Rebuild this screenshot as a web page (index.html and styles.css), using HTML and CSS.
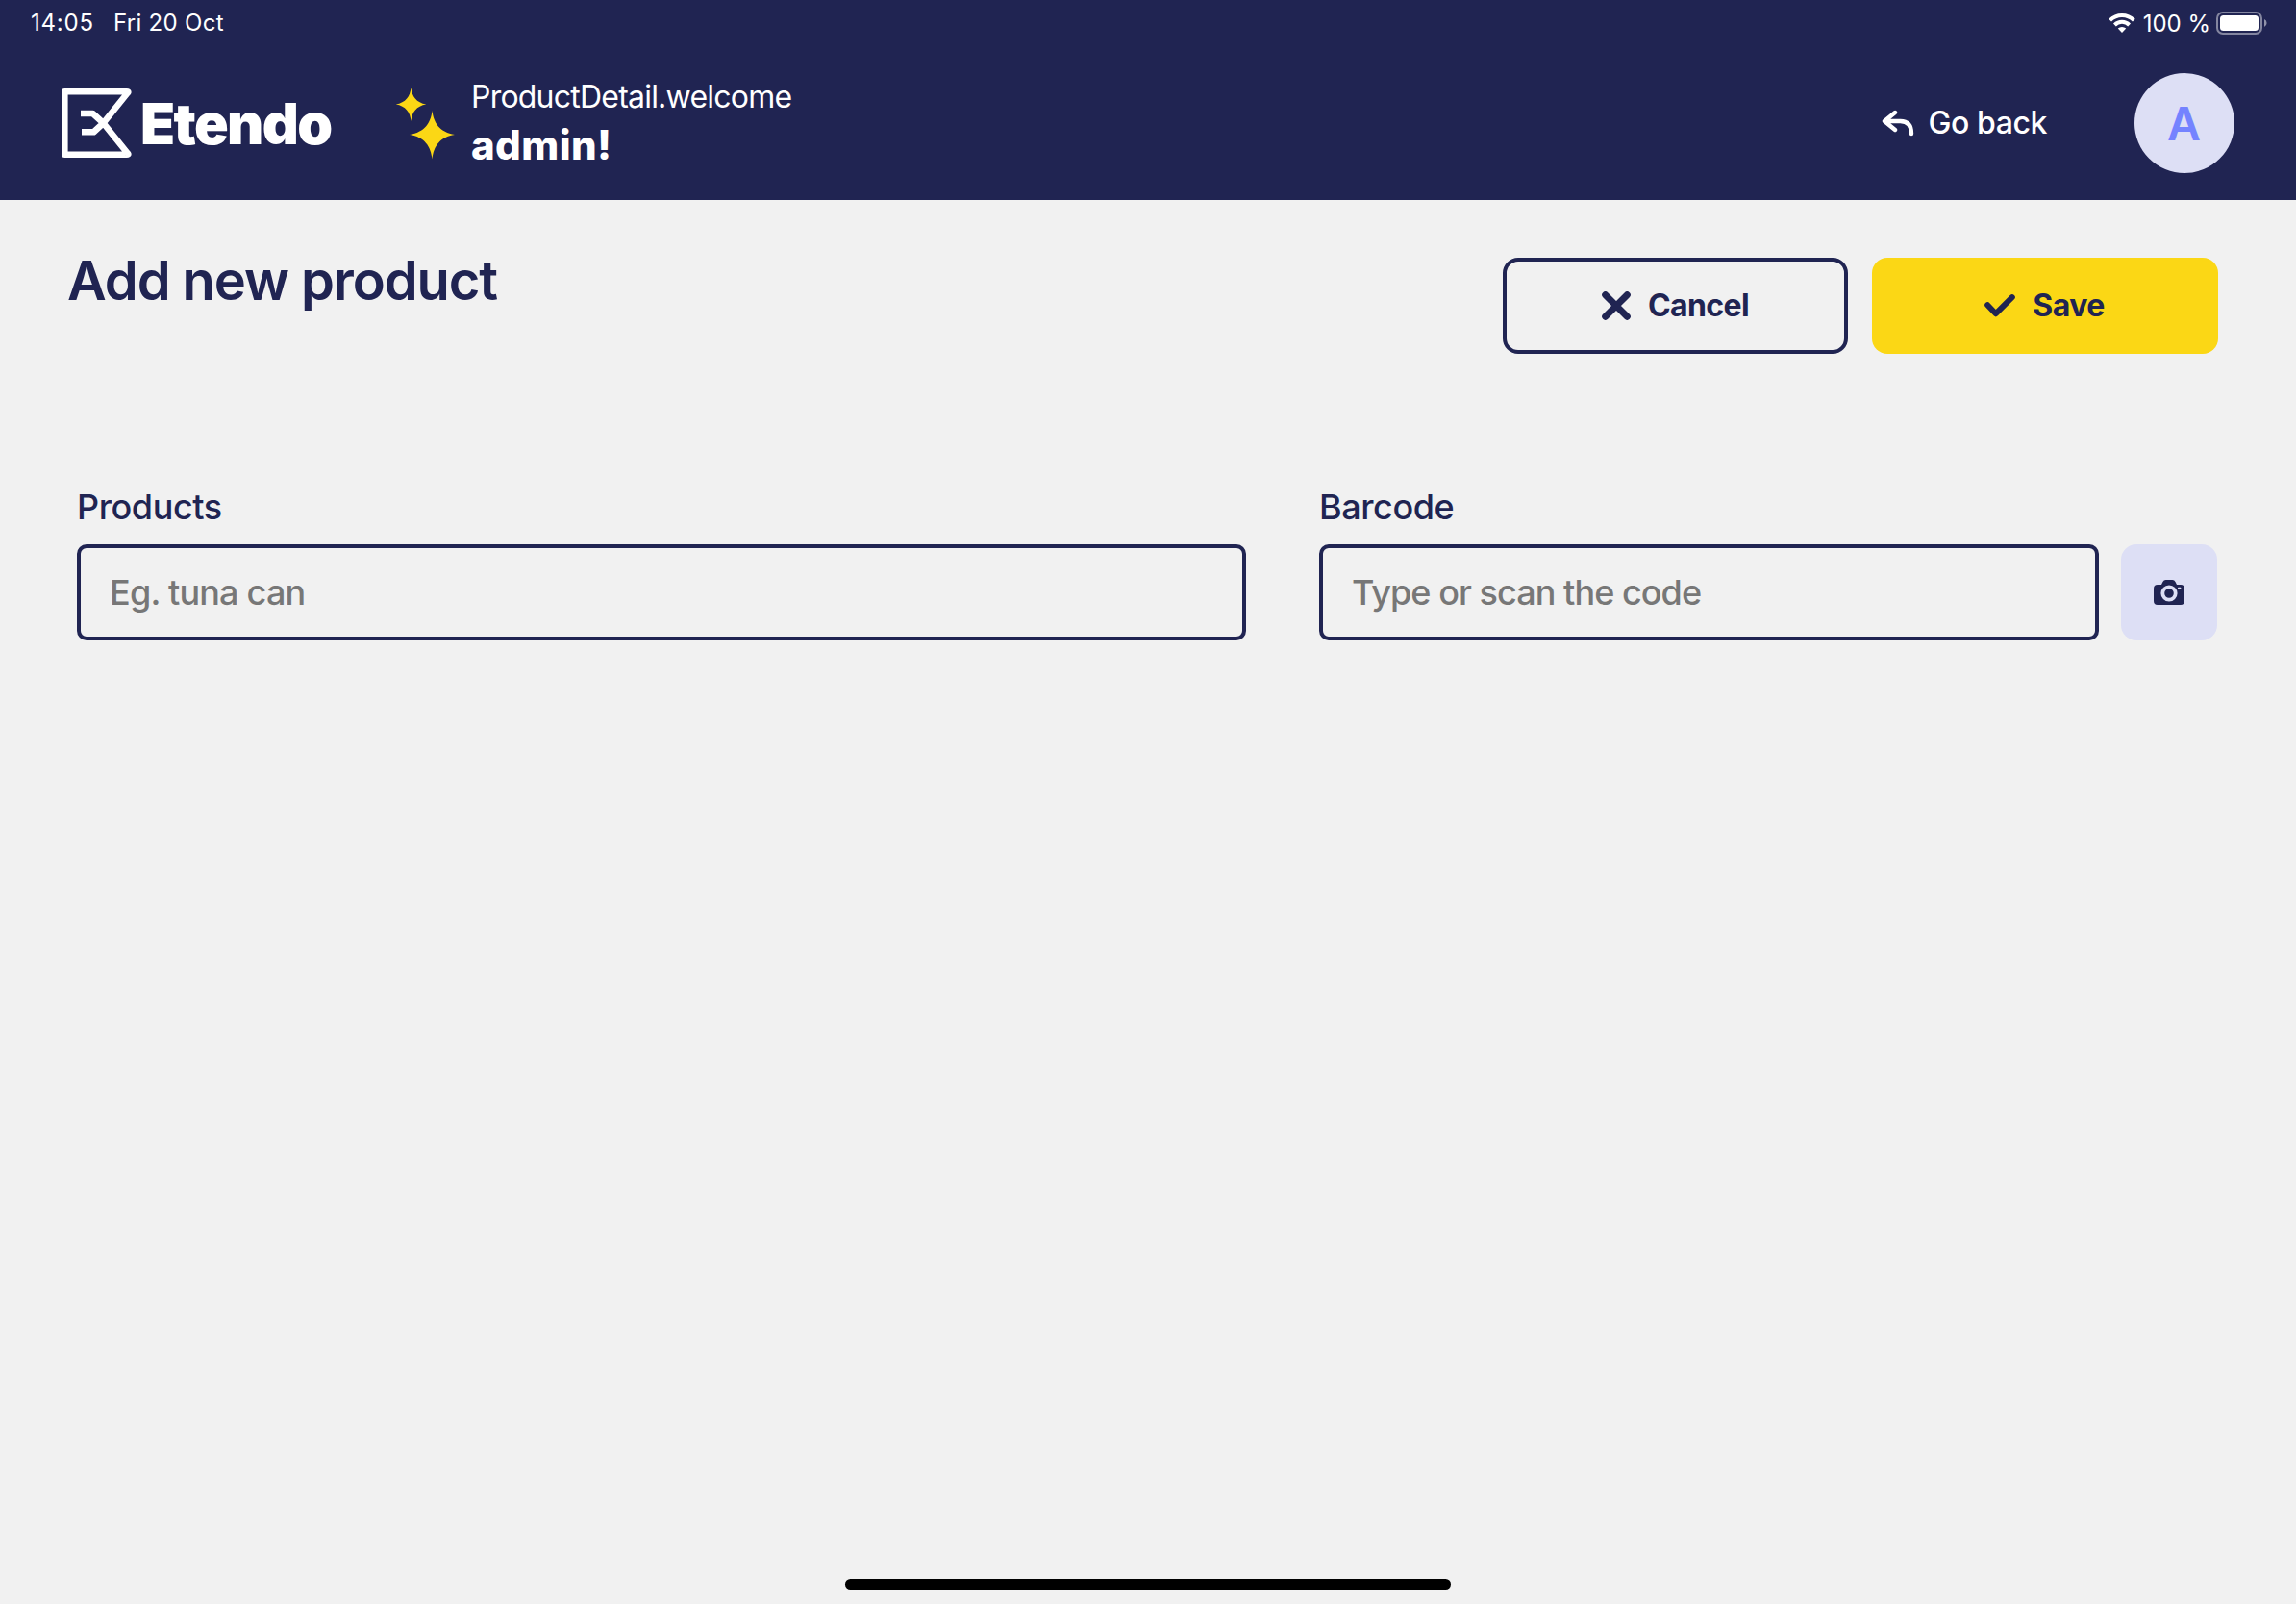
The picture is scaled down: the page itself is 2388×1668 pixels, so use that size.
FILE: index.html
```html
<!DOCTYPE html>
<html lang="en">
<head>
<meta charset="utf-8">
<title>Etendo</title>
<link rel="stylesheet" href="styles.css">
</head>
<body>
<header class="header">
  <div class="status">
    <div class="status-left"><span class="time">14:05</span><span class="date">Fri 20 Oct</span></div>
    <div class="status-right">
      <svg class="wifi" width="28" height="20" viewBox="0 0 28 20"><g fill="none" stroke="#fff" stroke-width="4"><path d="M1.6 7.2a17.6 17.6 0 0 1 24.8 0"/><path d="M6.4 12a10.8 10.8 0 0 1 15.2 0"/></g><path fill="#fff" d="M14 20l-4.2-4.4a6 6 0 0 1 8.4 0z"/></svg>
      <span class="percent">100 %</span>
      <svg class="battery" width="54" height="24" viewBox="0 0 54 24"><rect x="1" y="1" width="46" height="22" rx="6" fill="none" stroke="#fff" stroke-opacity=".45" stroke-width="2"/><rect x="4" y="4" width="40" height="16" rx="3.5" fill="#fff"/><path d="M50 8a4.4 4.4 0 0 1 0 8z" fill="#fff" fill-opacity=".5"/></svg>
    </div>
  </div>
  <div class="bar">
    <div class="logo">
      <svg width="73" height="72" viewBox="0 0 73 72"><path fill="none" stroke="#fff" stroke-width="6.6" stroke-linejoin="round" d="M20 26h12.500l11 10L69 67.800q1 .9-1.200.9H3.300V3.300H67.800q2.200 0 1.200 1L43.500 36 33.500 45.200H21"/></svg>
      <span class="brand">Etendo</span>
    </div>
    <svg class="sparkles" width="64" height="78" viewBox="0 0 64 78" fill="#fbd715"><path d="M16.500 2C17.500 11.200 22 17.800 32.300 19.500C22 21.200 17.500 27.800 16.500 37C15.500 27.800 11 21.200.7 19.500C11 17.800 15.500 11.200 16.500 2z"/><path d="M38.500 26C40 39 46.500 48.500 62 51C46.500 53.500 40 63 38.500 76.500C37 63 30.500 53.500 15 51C30.500 48.500 37 39 38.500 26z"/></svg>
    <div class="greeting"><span class="welcome">ProductDetail.welcome</span><strong class="user">admin!</strong></div>
    <div class="back">
      <svg width="34" height="28" viewBox="0 0 34 28" fill="none" stroke="#fff" stroke-width="4.400" stroke-linecap="round" stroke-linejoin="round"><path d="M14 3L3 12l11 9M4 12h15.500Q31 12 31 25"/></svg>
      <span class="caption">Go back</span>
    </div>
    <div class="avatar">A</div>
  </div>
</header>
<main class="main">
  <div class="top">
    <h1 class="title">Add new product</h1>
    <div class="actions">
      <button class="btn cancel"><svg width="30" height="30" viewBox="0 0 30 30" stroke="#202452" stroke-width="7" stroke-linecap="round"><path d="M3.700 3.700l22.600 22.600M26.300 3.700L3.700 26.300"/></svg><span class="caption">Cancel</span></button>
      <button class="btn save"><svg width="32" height="24" viewBox="0 0 32 24" fill="none" stroke="#202452" stroke-width="6" stroke-linecap="round" stroke-linejoin="round"><path d="M3.200 11.200l8.600 9L28.800 3.200"/></svg><span class="caption">Save</span></button>
    </div>
  </div>
  <div class="form">
    <div class="field product">
      <label class="label">Products</label>
      <div class="input">Eg. tuna can</div>
    </div>
    <div class="field barcode">
      <label class="label">Barcode</label>
      <div class="scan">
        <div class="input code">Type or scan the code</div>
        <button class="camera"><svg width="32" height="26" viewBox="0 0 32 26"><path fill="#202452" d="M4 5h4l1.500-3Q10.500 0 12.500 0h7q2 0 3 2L24 5h4q4 0 4 4v13q0 4-4 4H4q-4 0-4-4V9q0-4 4-4z"/><circle cx="16" cy="14" r="6.700" fill="#202452" stroke="#dddff5" stroke-width="3.800"/><rect x="25" y="7.800" width="3.400" height="2" rx=".6" fill="#dddff5"/></svg></button>
      </div>
    </div>
  </div>
</main>
<footer class="home"><div class="home-bar"></div></footer>
</body>
</html>
```
FILE: styles.css
```css
* { box-sizing: border-box; }
body {
  margin: 0;
  height: 1668px;
  display: flex;
  flex-direction: column;
  background: #f1f1f1;
  color: #202452;
  font-family: Inter, "Liberation Sans", sans-serif;
}
svg { display: block; flex: none; }
span, strong { white-space: nowrap; }
button { border: 0; padding: 0; font: inherit; color: inherit; }

.header { height: 208px; background: #202452; color: #fff; }
.status { height: 48px; padding: 0 29px 0 32px; display: flex; justify-content: space-between; font-size: 24px; line-height: 47px; }
.status-left { display: flex; gap: 20px; }
.time { letter-spacing: 0.8px; }
.date { letter-spacing: 0.3px; }
.status-right { display: flex; align-items: center; }
.percent { margin: 0 6px 0 8px; }
.bar { height: 160px; padding: 0 64px; display: flex; align-items: center; }
.logo { display: flex; align-items: center; width: 347px; }
.brand { margin: 2px 0 0 9px; font-size: 59px; font-weight: 900; line-height: 72px; letter-spacing: -1.6px; }
.greeting { display: flex; flex-direction: column; margin: -3px 0 0 15px; }
.welcome { font-size: 32px; line-height: 48px; font-weight: 400; letter-spacing: -0.78px; }
.user { font-size: 42px; line-height: 52px; font-weight: 800; letter-spacing: 0.4px; }
.caption { padding-bottom: 2px; }
.back { display: flex; align-items: center; margin-left: auto; gap: 14px; font-size: 32px; font-weight: 500; letter-spacing: -0.4px; }
.avatar { width: 104px; height: 104px; padding-right: 1px; margin-left: 91px; border-radius: 50%; background: #dddff5; color: #7483ff; display: flex; align-items: center; justify-content: center; font-size: 48px; font-weight: 600; }

.main { flex: 1; padding: 50px 82px 0 80px; }
.top { display: flex; justify-content: space-between; align-items: flex-start; margin: 0 -1px 0 -10px; }
.title { margin: 0; font-size: 56px; line-height: 68px; font-weight: 600; letter-spacing: -1.08px; }
.actions { display: flex; gap: 25px; margin-top: 10px; }
.btn { width: 360px; height: 100px; border-radius: 16px; display: flex; align-items: center; justify-content: center; gap: 18px; font-size: 32px; font-weight: 700; letter-spacing: -0.6px; }
.cancel { width: 359px; border: 4px solid #202452; background: none; }
.save { background: #fbd715; padding-right: 1px; }
.form { display: flex; gap: 76px; margin-top: 137px; }
.product { width: 1216px; }
.barcode { flex: 1; }
.label { display: block; margin: 0 0 17px; font-size: 36px; line-height: 44px; font-weight: 550; letter-spacing: -0.42px; }
.input { height: 100px; flex: 1; border: 4px solid #202452; border-radius: 10px; padding: 0 30px; display: flex; align-items: center; color: #777; font-size: 36px; font-weight: 450; letter-spacing: -0.8px; white-space: nowrap; }
.code { letter-spacing: -0.95px; }
.scan { display: flex; gap: 23px; }
.camera { width: 100px; height: 100px; border-radius: 16px; background: #dddff5; display: flex; align-items: center; justify-content: center; }
.home { height: 26px; display: flex; justify-content: center; }
.home-bar { width: 630px; height: 11px; border-radius: 6px; background: #000; }
```
